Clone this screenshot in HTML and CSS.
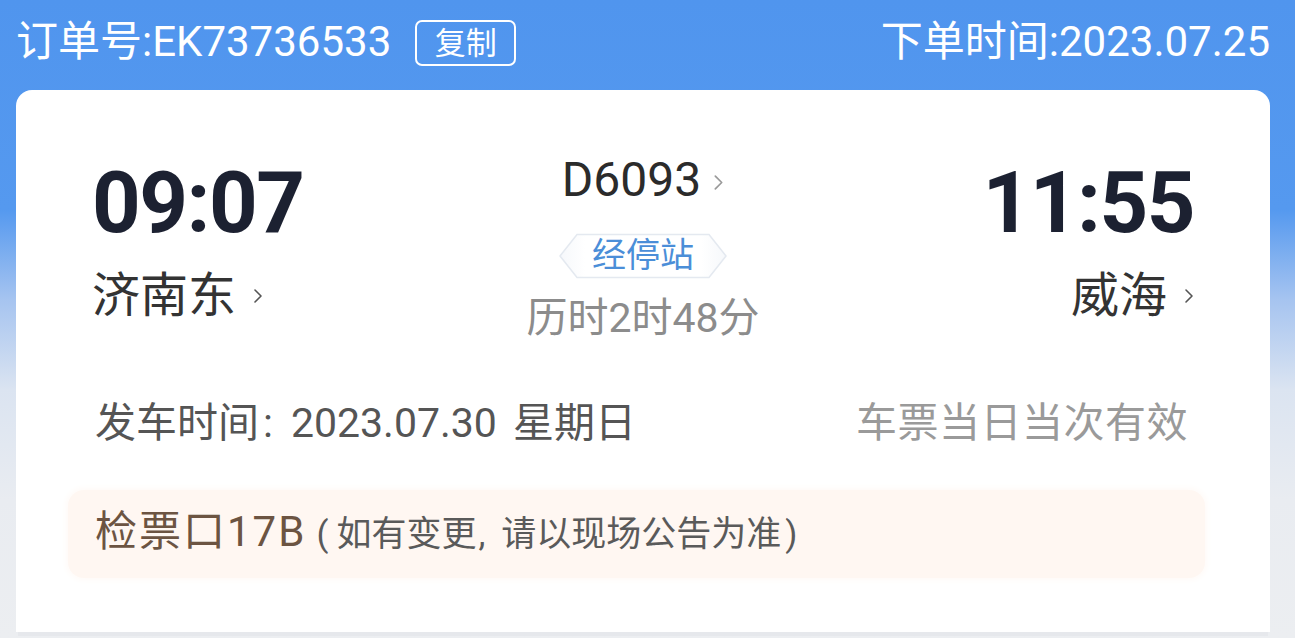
FILE: index.html
```html
<!DOCTYPE html>
<html lang="zh-CN">
<head>
<meta charset="utf-8">
<title>订单详情</title>
<link rel="stylesheet" href="styles.css">
</head>
<body>
<div class="page">
  <header class="topbar">
    <div class="order">
      <span class="order-no">订单号:EK73736533</span>
      <span class="copy-btn">复制</span>
    </div>
    <div class="order-time">下单时间:2023.07.25</div>
  </header>

  <section class="card">
    <div class="route">
      <div class="end end-left">
        <div class="time">09:07</div>
        <div class="station">济南东<svg class="chev chev-station" viewBox="0 0 10 16"><polyline points="2,2 8,8 2,14"/></svg></div>
      </div>
      <div class="middle">
        <div class="train">D6093<svg class="chev chev-train" viewBox="0 0 10 16"><polyline points="2,2 8,8 2,14"/></svg></div>
        <div class="stops">
          <svg class="stops-bg" viewBox="0 0 170 46" preserveAspectRatio="none">
            <defs>
              <linearGradient id="hexfill" x1="0" x2="1" y1="0" y2="0">
                <stop offset="0" stop-color="#f6f8fb"/>
                <stop offset="0.15" stop-color="#ffffff"/>
                <stop offset="0.85" stop-color="#ffffff"/>
                <stop offset="1" stop-color="#f6f8fb"/>
              </linearGradient>
            </defs>
            <path d="M19 1.5 H151 L168 23 L151 44.5 H19 L2 23 Z" fill="url(#hexfill)" stroke="#e4e9f0" stroke-width="1.5"/>
          </svg>
          <span class="stops-text">经停站</span>
        </div>
        <div class="duration">历时2时48分</div>
      </div>
      <div class="end end-right">
        <div class="time">11:55</div>
        <div class="station">威海<svg class="chev chev-station" viewBox="0 0 10 16"><polyline points="2,2 8,8 2,14"/></svg></div>
      </div>
    </div>

    <div class="date-row">
      <div class="depart">发车时间<span class="colon">:</span>2023.07.30 星期日</div>
      <div class="valid">车票当日当次有效</div>
    </div>

    <div class="gate">
      <span class="gate-main">检票口17B</span><span class="gate-note"><span class="paren">(</span>如有变更<span class="comma">,</span>请以现场公告为准<span class="paren">)</span></span>
    </div>
  </section>
</div>
</body>
</html>
```

FILE: styles.css
```css
html, body {
  margin: 0;
  padding: 0;
}

body {
  width: 1295px;
  height: 638px;
  overflow: hidden;
  font-family: Roboto, "Noto Sans CJK SC", sans-serif;
  background: linear-gradient(180deg, #5095ee 0px, #5599ef 210px, #a6c4f0 300px, #dbe4f1 390px, #e9ecf1 500px, #eceef1 638px);
}

.page {
  display: flex;
  flex-direction: column;
}

.topbar {
  height: 84px;
  padding: 0 25px 6px 16px;
  display: flex;
  align-items: center;
  justify-content: space-between;
  color: #ffffff;
  font-size: 42px;
  line-height: 42px;
}

.order {
  display: flex;
  align-items: center;
  gap: 24px;
}

.copy-btn {
  display: flex;
  align-items: center;
  justify-content: center;
  box-sizing: border-box;
  width: 101px;
  height: 46px;
  margin-top: 2px;
  border: 2px solid #ffffff;
  border-radius: 7px;
  font-size: 31px;
  line-height: 31px;
}

.card {
  margin: 0 25px 0 16px;
  height: 542px;
  box-sizing: border-box;
  background: #ffffff;
  border-radius: 16px 16px 0 0;
  padding: 70px 76px 0 76px;
  box-shadow: 0 6px 0 -2px #e6e8ec;
  display: flex;
  flex-direction: column;
}

.route {
  display: flex;
  align-items: flex-start;
}

.end {
  flex: 1;
  display: flex;
  flex-direction: column;
}

.end-right {
  align-items: flex-end;
}

.time {
  font-size: 85px;
  line-height: 86px;
  font-weight: 700;
  color: #1c2131;
  letter-spacing: -1.5px;
}

.station {
  margin-top: 27px;
  font-size: 48px;
  line-height: 46px;
  color: #333333;
  display: flex;
  align-items: center;
}

.chev {
  fill: none;
  stroke-linecap: round;
  stroke-linejoin: round;
}

.chev-station {
  width: 10px;
  height: 16px;
  margin-left: 17px;
  stroke: #555555;
  stroke-width: 1.6;
}

.middle {
  width: 260px;
  display: flex;
  flex-direction: column;
  align-items: center;
}

.train {
  font-size: 48px;
  line-height: 40px;
  color: #2b2b2b;
  display: flex;
  align-items: center;
}

.chev-train {
  width: 11px;
  height: 17px;
  margin-left: 12px;
  margin-top: 4px;
  stroke: #9a9a9a;
  stroke-width: 1.6;
}

.stops {
  position: relative;
  margin-top: 33px;
  width: 170px;
  height: 46px;
  display: flex;
  align-items: center;
  justify-content: center;
}

.stops-bg {
  position: absolute;
  inset: 0;
  width: 100%;
  height: 100%;
}

.stops-text {
  position: relative;
  font-size: 34px;
  line-height: 34px;
  color: #4b8ed8;
  margin-top: -2px;
}

.duration {
  margin-top: 19px;
  font-size: 41px;
  line-height: 40px;
  color: #8c8c8c;
}

.date-row {
  margin-top: 65px;
  margin-right: 6px;
  display: flex;
  justify-content: space-between;
  font-size: 41px;
  line-height: 40px;
}

.depart {
  color: #555555;
  margin-left: 3px;
  word-spacing: 6px;
}

.colon {
  margin: 0 18px 0 4px;
}

.valid {
  color: #9a9a9a;
  letter-spacing: 0.5px;
}

.gate {
  margin: 47px -11px 0 -24px;
  height: 88px;
  box-sizing: border-box;
  padding: 22px 0 0 27px;
  background: #fff7f2;
  border-radius: 16px;
  box-shadow: 0 0 6px 2px #fffaf7;
  display: flex;
  align-items: baseline;
}

.gate-main {
  font-size: 42px;
  line-height: 40px;
  color: #6c5442;
  letter-spacing: 2px;
}

.gate-note {
  font-size: 35px;
  line-height: 40px;
  color: #5a5a5a;
  margin-left: 10px;
}

.paren {
  margin: 0 8px 0 0;
}

.paren:last-child {
  margin: 0 0 0 4px;
}

.comma {
  margin: 0 16px 0 2px;
}
```
